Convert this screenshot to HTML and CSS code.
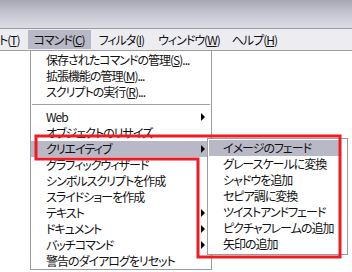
FILE: index.html
```html
<!DOCTYPE html>
<html lang="ja">
<head>
<meta charset="utf-8">
<link rel="stylesheet" href="styles.css">
</head>
<body>
<div class="screen">
  <div class="titlebar"></div>
  <div class="menubar">
    <span class="mb-item mb-first">ト(<u>T</u>)</span>
    <span class="mb-item mb-active">コマンド(<u>C</u>)</span>
    <span class="mb-item">フィルタ(<u>I</u>)</span>
    <span class="mb-item">ウィンドウ(<u>W</u>)</span>
    <span class="mb-item">ヘルプ(<u>H</u>)</span>
  </div>

  <div class="menu main-menu">
    <div class="row">保存されたコマンドの管理(<u>S</u>)...</div>
    <div class="row">拡張機能の管理(<u>M</u>)...</div>
    <div class="row">スクリプトの実行(<u>R</u>)...</div>
    <div class="sep"></div>
    <div class="row has-sub">Web</div>
    <div class="row">オブジェクトのリサイズ</div>
    <div class="row has-sub active">クリエイティブ</div>
    <div class="row">グラフィックウィザード</div>
    <div class="row">シンボルスクリプトを作成</div>
    <div class="row">スライドショーを作成</div>
    <div class="row has-sub">テキスト</div>
    <div class="row has-sub">ドキュメント</div>
    <div class="row has-sub">バッチコマンド</div>
    <div class="row">警告のダイアログをリセット</div>
  </div>

  <div class="menu sub-menu">
    <div class="row active">イメージのフェード</div>
    <div class="row">グレースケールに変換</div>
    <div class="row">シャドウを追加</div>
    <div class="row">セピア調に変換</div>
    <div class="row">ツイストアンドフェード</div>
    <div class="row">ピクチャフレームの追加</div>
    <div class="row">矢印の追加</div>
  </div>

  <svg class="annot" width="352" height="272" viewBox="0 0 352 272">
    <polygon points="36,136 340,136 340,257 198,257 198,159 36,159" fill="none" stroke="#ec1c24" stroke-width="3"/>
  </svg>
</div>
</body>
</html>
```
FILE: styles.css
```css
html, body {
  margin: 0;
  padding: 0;
  background: #ffffff;
}
.screen {
  position: relative;
  width: 352px;
  height: 272px;
  overflow: hidden;
  background: #ffffff;
  font-family: "Noto Sans CJK JP", "Noto Sans", sans-serif;
  font-size: 12px;
  letter-spacing: -1px;
  font-feature-settings: "palt";
  color: #111;
}
.titlebar {
  height: 28px;
  background: linear-gradient(#a6a6b4, #c4c4d0 45%, #dcdce4);
  border-bottom: 1px solid #9a9aa8;
}
.menubar {
  display: flex;
  align-items: center;
  background: #ededf1;
  border-bottom: 1px solid #a0a0a0;
  box-sizing: border-box;
  height: 22px;
}
.mb-item {
  height: 19px;
  line-height: 19px;
  padding: 0 6px;
  white-space: nowrap;
}
.mb-first {
  margin-left: -7px;
  margin-right: 2px;
}
.mb-active {
  background: #b8b8c6;
}
.mb-item:nth-child(3) { margin-left: 2px; }
.mb-item:nth-child(4) { margin-left: 2px; }
.mb-item:nth-child(5) { margin-left: 0; }
u {
  text-decoration: underline;
  text-underline-offset: 1px;
}
.menu {
  position: absolute;
  background: #ffffff;
  border: 1px solid #9c9c9c;
  padding: 1px 0 1px 0;
  box-sizing: border-box;
}
.main-menu {
  left: 30px;
  top: 50px;
  width: 182px;
  height: 220px;
}
.sub-menu {
  left: 207px;
  top: 138px;
  width: 141px;
  height: 117px;
}
.row {
  position: relative;
  height: 16px;
  line-height: 16px;
  padding-left: 15px;
  white-space: nowrap;
}
.row.active {
  background: #b8b8c6;
}
.sub-menu .row.active {
  margin-left: 1px;
  margin-right: 8px;
  padding-left: 14px;
}
.has-sub::after {
  content: "";
  position: absolute;
  right: 6px;
  top: 4px;
  border-left: 4px solid #000;
  border-top: 4px solid transparent;
  border-bottom: 4px solid transparent;
}
.sep {
  height: 9px;
  position: relative;
}
.sep::before {
  content: "";
  position: absolute;
  left: 1px;
  right: 1px;
  top: 4px;
  border-top: 1px solid #a0a0a0;
}
.annot {
  position: absolute;
  left: 0;
  top: 0;
  pointer-events: none;
}
```
